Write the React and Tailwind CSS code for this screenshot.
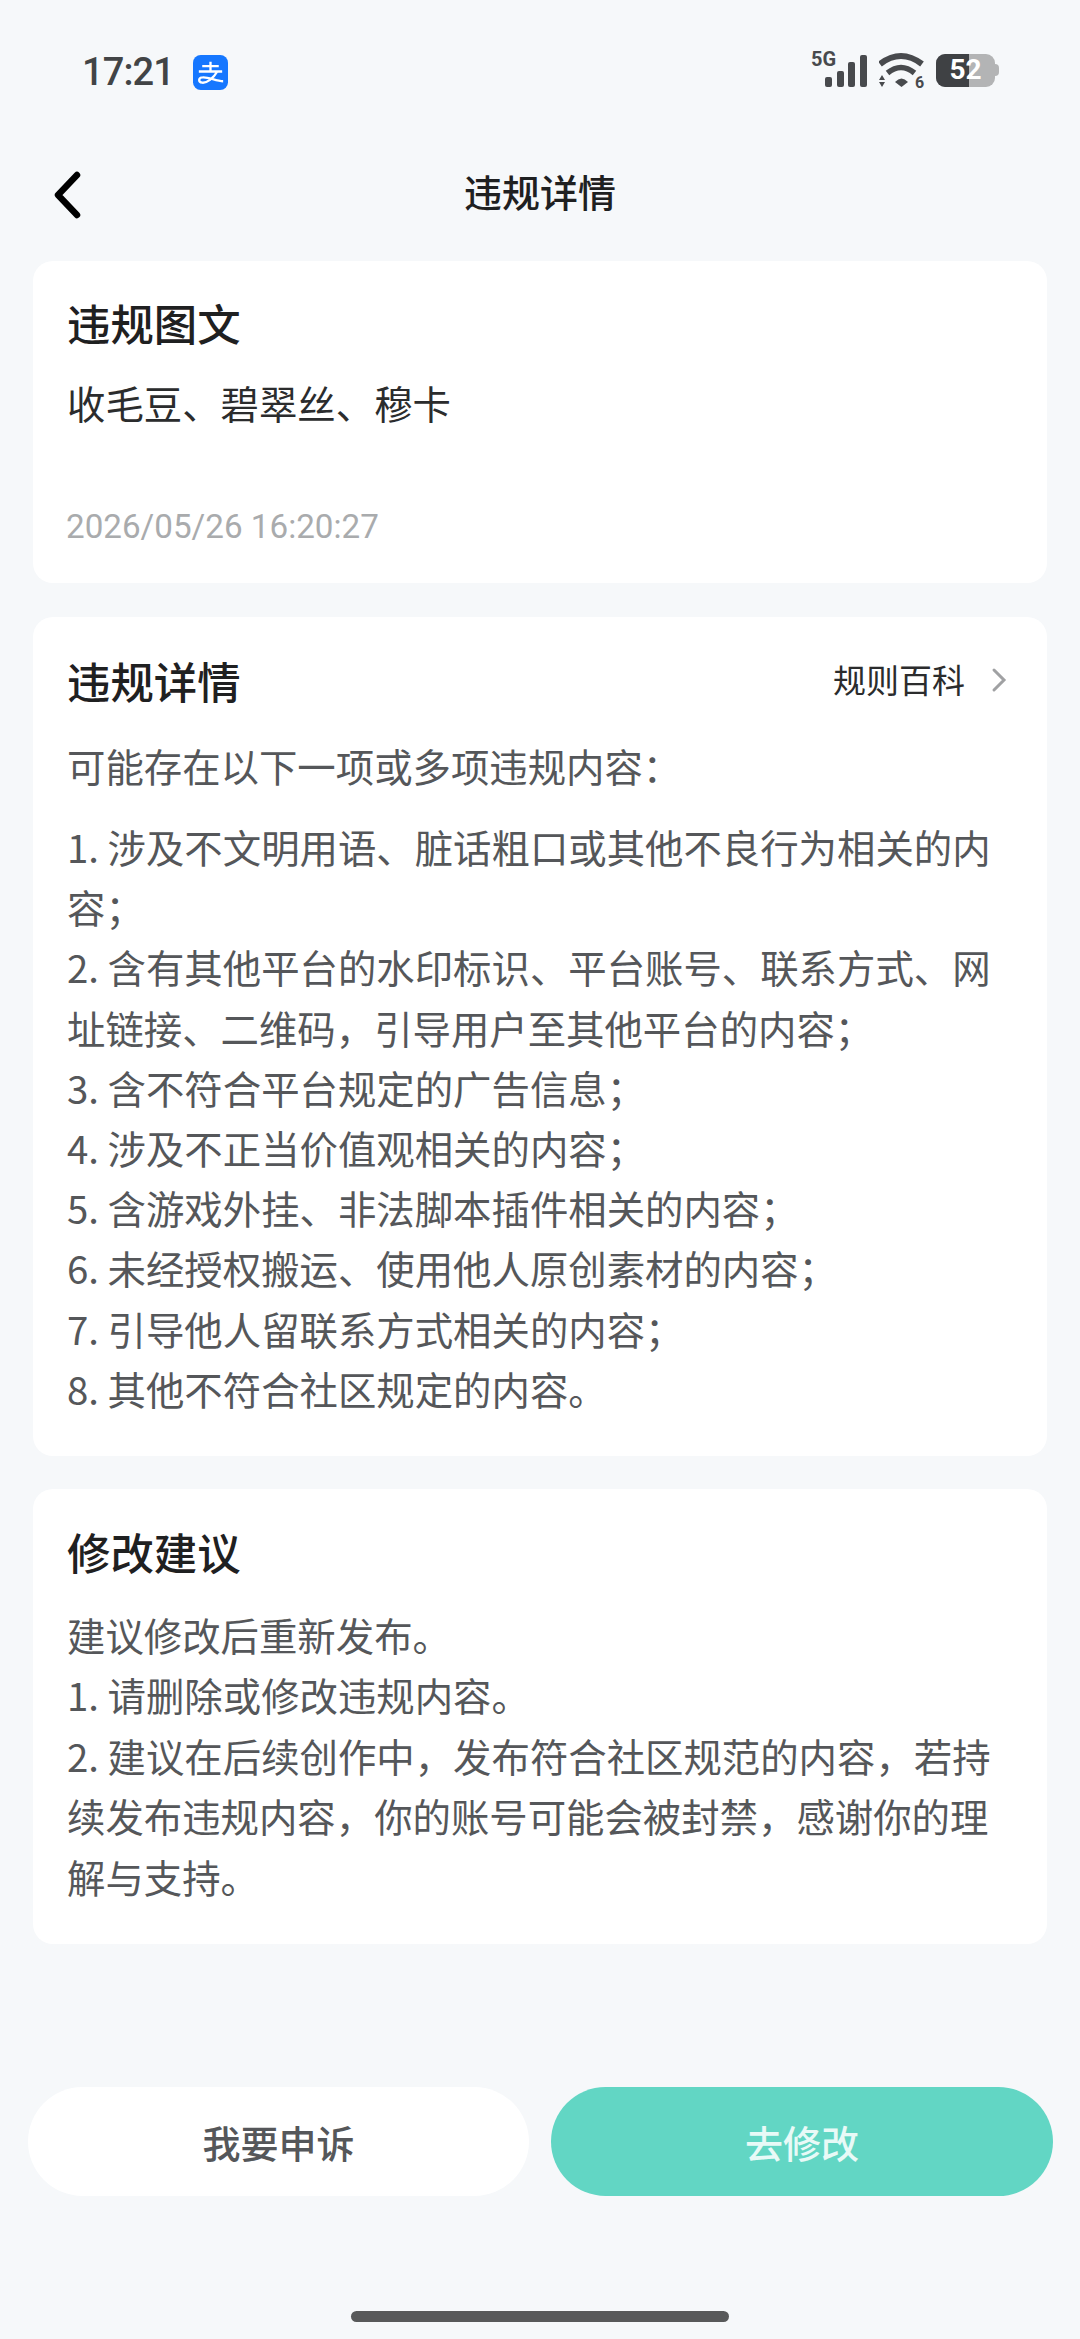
import React from "react";

const rules = [
  "1. 涉及不文明用语、脏话粗口或其他不良行为相关的内容；",
  "2. 含有其他平台的水印标识、平台账号、联系方式、网址链接、二维码，引导用户至其他平台的内容；",
  "3. 含不符合平台规定的广告信息；",
  "4. 涉及不正当价值观相关的内容；",
  "5. 含游戏外挂、非法脚本插件相关的内容；",
  "6. 未经授权搬运、使用他人原创素材的内容；",
  "7. 引导他人留联系方式相关的内容；",
  "8. 其他不符合社区规定的内容。",
];

const advice = [
  "建议修改后重新发布。",
  "1. 请删除或修改违规内容。",
  "2. 建议在后续创作中，发布符合社区规范的内容，若持续发布违规内容，你的账号可能会被封禁，感谢你的理解与支持。",
];

const StatusIcons = () => (
  <div className="mb-[4px] flex h-[40px] items-center">
    <svg width="56" height="56" viewBox="0 -8 56 56" fill="#484a4d">
      <text x="0" y="16" fontSize="20" fontWeight="700" fontFamily="Roboto, sans-serif">5G</text>
      <rect x="14" y="27" width="7" height="10" rx="2" />
      <rect x="26" y="21" width="7" height="16" rx="2" />
      <rect x="37" y="12" width="7" height="25" rx="2" />
      <rect x="49" y="5" width="7" height="32" rx="2" />
    </svg>
    <svg className="ml-[12px]" width="46" height="56" viewBox="0 -8 46 56" fill="#484a4d">
      <path d="M1 14 Q22 -2 43 14" fill="none" stroke="#484a4d" strokeWidth="6" />
      <path d="M8.5 23 Q22 12 35.5 23" fill="none" stroke="#484a4d" strokeWidth="5.5" />
      <path d="M16 32 Q22.5 25 29 32 L22.5 37 Z" />
      <path d="M3 25 L0 30 L6 30 Z M0 32 L6 32 L3 37 Z" />
      <text x="36" y="38" fontSize="16" fontWeight="700" fontFamily="Roboto, sans-serif">6</text>
    </svg>
    <div className="relative ml-[11px] flex h-[33px] w-[59px] rounded-[9px] bg-[#b3b4b5]">
      <div className="h-full w-[33px] rounded-l-[9px] bg-[#3f4144]" />
      <div
        className="absolute inset-0 flex items-center justify-center text-[28px] leading-none font-bold text-white"
        style={{ fontFamily: "Roboto, sans-serif" }}
      >
        52
      </div>
    </div>
    <div className="h-[12px] w-[4px] rounded-r-sm bg-[#b3b4b5]" />
  </div>
);

const Card = ({ title, right, children, className }) => (
  <div className={"mx-[33px] rounded-[20px] bg-white px-[34px] " + className}>
    <div className="flex items-center justify-between">
      <div className="text-[43.4px] leading-[64px] font-medium text-[#1f2021]">{title}</div>
      {right}
    </div>
    {children}
  </div>
);

export default function App() {
  return (
    <div
      className="flex h-[2339px] w-[1080px] flex-col overflow-hidden bg-[#f6f8fa]"
      style={{ fontFamily: '"Noto Sans CJK SC", sans-serif' }}
    >
      {/* status bar */}
      <div className="flex h-[110px] items-center justify-between pl-[82px] pr-[81px] pt-[34px]">
        <div className="flex items-center gap-[19px]">
          <span className="text-[38px] font-medium tracking-[-0.9px] text-[#424446]" style={{ fontFamily: "Roboto, sans-serif" }}>17:21</span>
          <svg width="35" height="35" viewBox="0 0 36 36">
            <rect width="36" height="36" rx="8" fill="#1677ff" />
            <path d="M9.5 11.5 H26.5 M18 7 V17 M6 17 H30 M25 17 C21 24 14 29 9.5 28.5 C5 28 5.5 23 10 23 C16 22.5 24 27 31 27" fill="none" stroke="#fff" strokeWidth="2.4" />
          </svg>
        </div>
        <StatusIcons />
      </div>

      {/* nav */}
      <div className="relative mt-[41px] flex h-[85px] items-center justify-center">
        <svg className="absolute left-[50px] top-[20px]" width="32" height="48" viewBox="0 0 32 48">
          <path d="M27 4 L8 24 L27 44" fill="none" stroke="#000" strokeWidth="6.5" strokeLinecap="round" strokeLinejoin="round" />
        </svg>
        <span className="mb-[6px] text-[38px] font-medium text-[#1f2021]">违规详情</span>
      </div>

      <Card title="违规图文" className="mt-[25px] h-[322px] pt-[29px]">
        <div className="mt-[18px] text-[38.4px] leading-[60px] text-[#2b2c2d]">收毛豆、碧翠丝、穆卡</div>
        <div className="ml-[-1px] mt-[71px] text-[33.2px] leading-[48px] text-[#a9abad]" style={{ fontFamily: "Roboto, sans-serif" }}>2026/05/26 16:20:27</div>
      </Card>

      <Card
        title="违规详情"
        className="mt-[34px] h-[839px] pt-[31px]"
        right={
          <div className="mr-[6px] flex items-center text-[33px] text-[#2b2c2d]">
            规则百科
            <svg className="ml-[26px]" width="16" height="26" viewBox="0 0 16 26">
              <path d="M3 3 L13 13 L3 23" fill="none" stroke="#a0a1a3" strokeWidth="3" strokeLinecap="round" />
            </svg>
          </div>
        }
      >
        <div className="mt-[23px] text-[38.4px] leading-[60px] text-[#55575a]">可能存在以下一项或多项违规内容：</div>
        <div className="mt-[21px] text-[38.4px] leading-[60.2px] text-[#55575a]">
          {rules.map((r) => (
            <div key={r}>{r}</div>
          ))}
        </div>
      </Card>

      <Card title="修改建议" className="mt-[33px] h-[455px] pt-[30px]">
        <div className="mt-[21px] text-[38.4px] leading-[60.4px] text-[#55575a]">
          {advice.map((r) => (
            <div key={r}>{r}</div>
          ))}
        </div>
      </Card>

      <div className="mt-[143px] flex gap-[22px] pl-[28px]">
        <div className="flex h-[109px] w-[501px] items-center justify-center rounded-full bg-white text-[38px] font-medium text-[#55575a]">我要申诉</div>
        <div className="flex h-[109px] w-[502px] items-center justify-center rounded-full bg-[#62d6c4] text-[38px] font-medium text-[#e8faf7]">去修改</div>
      </div>

      <div className="mx-auto mt-[115px] h-[11px] w-[378px] rounded-full bg-[#58595a]" />
    </div>
  );
}
